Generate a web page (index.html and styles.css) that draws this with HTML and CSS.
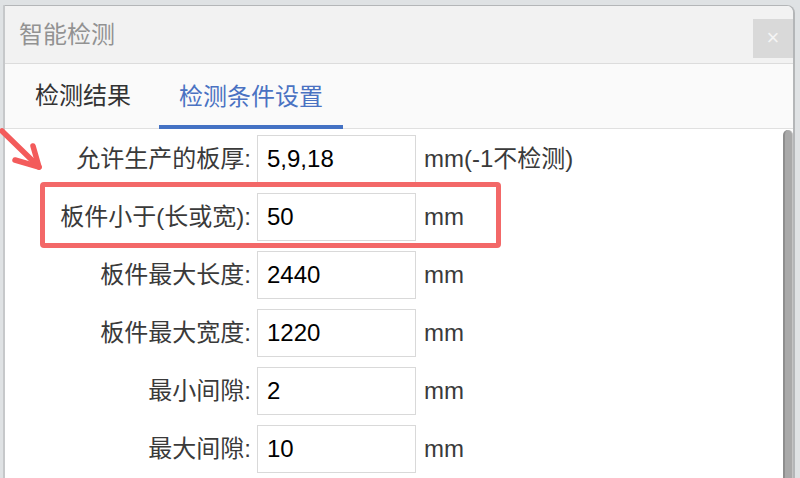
FILE: index.html
```html
<!DOCTYPE html>
<html lang="zh-CN">
<head>
<meta charset="utf-8">
<title>智能检测</title>
<link rel="stylesheet" href="styles.css">
</head>
<body>
<div class="dialog">
  <div class="titlebar">
    <span class="title">智能检测</span>
    <span class="close">×</span>
  </div>
  <div class="tabs">
    <div class="tab">检测结果</div>
    <div class="tab active">检测条件设置</div>
  </div>
  <div class="content">
    <div class="form">
      <div class="row"><label class="lbl">允许生产的板厚:</label><div class="inp">5,9,18</div><span class="unit">mm(-1不检测)</span></div>
      <div class="row"><label class="lbl">板件小于(长或宽):</label><div class="inp">50</div><span class="unit">mm</span></div>
      <div class="row"><label class="lbl">板件最大长度:</label><div class="inp">2440</div><span class="unit">mm</span></div>
      <div class="row"><label class="lbl">板件最大宽度:</label><div class="inp">1220</div><span class="unit">mm</span></div>
      <div class="row"><label class="lbl">最小间隙:</label><div class="inp">2</div><span class="unit">mm</span></div>
      <div class="row"><label class="lbl">最大间隙:</label><div class="inp">10</div><span class="unit">mm</span></div>
    </div>
    <div class="scrollbar"><div class="thumb"></div></div>
  </div>
</div>
<div class="highlight"></div>
<svg class="arrow" width="60" height="60" viewBox="0 0 60 60">
  <g fill="none" stroke="#f35b5b" stroke-width="5.5" stroke-linecap="round" stroke-linejoin="round">
    <line x1="2" y1="6" x2="39" y2="42"/>
    <polyline points="33,21 39,42 15,35"/>
  </g>
</svg>
</body>
</html>
```
FILE: styles.css
```css
html, body {
  margin: 0;
  padding: 0;
}
body {
  width: 800px;
  height: 478px;
  overflow: hidden;
  background: #dfe2e4;
  font-family: "Liberation Sans", "Noto Sans CJK SC", sans-serif;
  position: relative;
}
.dialog {
  margin: 5px 0 0 3px;
  width: 788px;
  height: 472px;
  display: flex;
  flex-direction: column;
  border-top: 1px solid #b4b6b8;
  border-left: 2px solid #c6c8ca;
  border-right: 2px solid #b4b6b8;
  border-top-right-radius: 8px;
  background: #fff;
  overflow: hidden;
}
.titlebar {
  height: 57px;
  flex: none;
  display: flex;
  align-items: center;
  background: #f2f2f2;
  border-bottom: 1px solid #dcdcdc;
}
.title {
  padding-left: 14px;
  font-size: 24px;
  color: #929292;
  line-height: 30px;
}
.close {
  margin-left: auto;
  align-self: flex-end;
  margin-bottom: 5px;
  width: 40px;
  height: 39px;
  background: #d9d9d9;
  color: #f4f4f4;
  font-size: 22px;
  line-height: 38px;
  text-align: center;
}
.tabs {
  height: 64px;
  flex: none;
  display: flex;
  padding-left: 10px;
  background: #fafafa;
  border-bottom: 1px solid #e0e0e0;
}
.tab {
  padding: 0 20px;
  height: 64px;
  line-height: 64px;
  font-size: 24px;
  color: #333;
  box-sizing: border-box;
}
.tab.active {
  margin-left: 8px;
  height: 65px;
  margin-bottom: -1px;
  color: #4a72c2;
  border-bottom: 4px solid #4472c4;
  line-height: 66px;
}
.content {
  flex: 1;
  min-height: 0;
  display: flex;
  overflow: hidden;
}
.form {
  flex: 1;
  display: flex;
  flex-direction: column;
  gap: 10px;
  padding-top: 6px;
}
.row {
  display: flex;
  align-items: center;
  height: 48px;
  flex: none;
}
.lbl {
  width: 246px;
  text-align: right;
  font-size: 24px;
  color: #3a3a3a;
  line-height: 30px;
}
.inp {
  margin-left: 6px;
  width: 159px;
  height: 48px;
  box-sizing: border-box;
  border: 1px solid #d9d9d9;
  padding: 0 9px;
  font-size: 24px;
  line-height: 46px;
  color: #000;
}
.unit {
  margin-left: 8px;
  font-size: 24px;
  color: #3a3a3a;
  line-height: 30px;
}
.scrollbar {
  width: 10px;
  padding-top: 1px;
  display: flex;
  flex-direction: column;
}
.thumb {
  flex: 1;
  box-sizing: border-box;
  background: #a9a9a9;
  border-left: 2px solid #8e8e8e;
  border-right: 1px solid #c4c4c4;
  border-radius: 5px 5px 0 0;
}
.highlight {
  position: absolute;
  left: 40px;
  top: 182px;
  width: 461px;
  height: 66px;
  box-sizing: border-box;
  border: 5px solid #f36868;
  border-radius: 4px;
}
.arrow {
  position: absolute;
  left: 0;
  top: 125px;
}
```
